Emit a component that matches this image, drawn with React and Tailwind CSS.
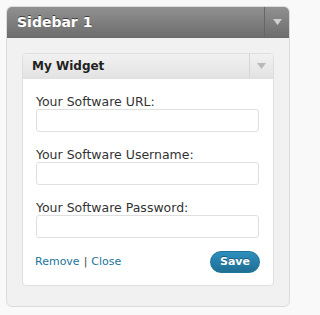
import React from "react";

function Arrow({ className }) {
  return (
    <svg width="9" height="6" viewBox="0 0 9 6" className={className}>
      <path d="M0 0 H9 L4.5 6 Z" fill="currentColor" />
    </svg>
  );
}

function Field({ label }) {
  return (
    <div>
      <label className="block text-[12.5px] leading-[15px] text-[#333]">{label}</label>
      <input
        type="text"
        className="block w-[223px] h-[23px] mt-0 border border-[#dfdfdf] rounded-[3px] bg-white px-1 text-xs focus:outline-none"
      />
    </div>
  );
}

export default function App() {
  return (
    <div className="min-h-screen bg-[#f9f9f9] p-[6px] pr-0" style={{ fontFamily: '"DejaVu Sans", sans-serif' }}>
      {/* Sidebar box */}
      <div className="w-[284px] h-[301px] rounded-[6px] border border-[#dcdcdc] bg-[#f1f1f1] overflow-hidden">
        <div className="h-[31px] flex bg-gradient-to-b from-[#919191] to-[#6d6d6d] border-b border-[#6a6a6a]">
          <div className="flex-1 flex items-center pl-[10px] text-[14px] font-bold text-white [text-shadow:0_-1px_0_#3f3f3f]">
            Sidebar 1
          </div>
          <div className="w-[25px] flex items-center justify-center border-l border-[#666]">
            <Arrow className="text-[#cfcfcf]" />
          </div>
        </div>

        {/* Widget */}
        <div className="mt-[15px] mx-[15px] w-[252px] h-[233px] rounded-[4px] border border-[#dfdfdf] bg-white overflow-hidden">
          <div className="h-[25px] flex bg-gradient-to-b from-[#f1f1f1] to-[#e3e3e3] border-b border-[#e0e0e0]">
            <div className="flex-1 flex items-center pl-[9px] text-[12px] font-bold text-[#222]">My Widget</div>
            <div className="w-[24px] flex items-center justify-center border-l border-[#d6d6d6]">
              <Arrow className="text-[#b9b9b9]" />
            </div>
          </div>

          <div className="pt-[15px] pl-[13px] flex flex-col gap-[15px]">
            <Field label="Your Software URL:" />
            <Field label="Your Software Username:" />
            <Field label="Your Software Password:" />
          </div>

          <div className="mt-[13px] pl-[12px] pr-[13px] flex items-center justify-between">
            <div className="text-[11px] text-[#21759b]">
              <a href="#">Remove</a>
              <span className="text-[#464646] mx-[4px]">|</span>
              <a href="#">Close</a>
            </div>
            <button className="w-[50px] h-[22px] rounded-full bg-gradient-to-b from-[#2e8fbd] to-[#1f6f95] border border-[#21759b] text-white text-[11px] font-bold [text-shadow:0_-1px_0_#1b5a78]">
              Save
            </button>
          </div>
        </div>
      </div>
    </div>
  );
}
